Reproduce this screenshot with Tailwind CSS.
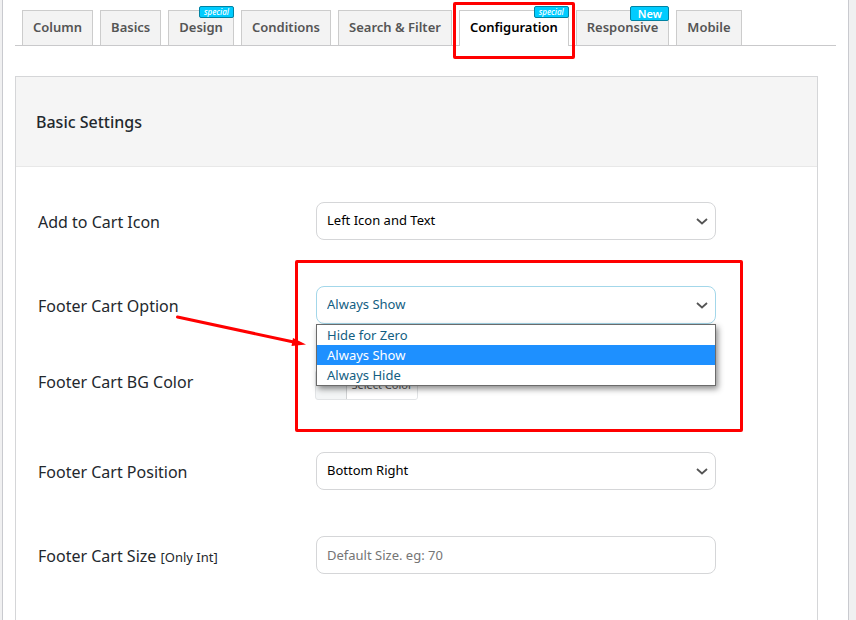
<!DOCTYPE html>
<html lang="en">
<head>
<meta charset="utf-8">
<meta name="viewport" content="width=device-width, initial-scale=1">
<title>Configuration</title>
<script src="https://cdn.jsdelivr.net/npm/@tailwindcss/browser@4"></script>
</head>
<body class="bg-[#f0f0f1] font-['Noto_Sans','Open_Sans',sans-serif] text-[#23282d]">
<main class="ml-[2px] mr-[7px] flex min-h-screen flex-col border-x border-[#c9cacf] bg-white pl-3 pr-3">

  <nav aria-label="Settings tabs" class="flex items-end gap-[7px] border-b border-[#c9c9cb] pl-[7px] pt-[10px] text-[13px] font-semibold text-[#555]">
    <a href="#column" class="flex h-[35px] items-center border border-b-0 border-[#ccc] bg-[#f3f3f3] px-[10px]">Column</a>
    <a href="#basics" class="flex h-[35px] items-center border border-b-0 border-[#ccc] bg-[#f3f3f3] px-[10px]">Basics</a>
    <a href="#design" class="relative flex h-[35px] items-center border border-b-0 border-[#ccc] bg-[#f3f3f3] px-[10px]">Design
      <span class="absolute -right-px -top-[5px] flex h-3 w-[35px] items-center justify-center rounded-xs border border-[#0083a3] bg-[#0cf] text-[8px] font-medium italic text-white">special</span>
    </a>
    <a href="#conditions" class="flex h-[35px] items-center border border-b-0 border-[#ccc] bg-[#f3f3f3] px-[10px]">Conditions</a>
    <a href="#search" class="flex h-[35px] items-center whitespace-nowrap border border-b-0 border-[#ccc] bg-[#f3f3f3] px-[10px]">Search &amp; Filter</a>
    <a href="#configuration" aria-current="page" class="relative -mb-px flex h-9 items-center border border-b-0 border-[#ccc] bg-white px-[10px] pb-px text-black">Configuration
      <span class="absolute -right-px -top-[5px] flex h-3 w-[35px] items-center justify-center rounded-xs border border-[#0083a3] bg-[#0cf] text-[8px] font-medium italic text-white">special</span>
      <span class="pointer-events-none absolute -bottom-[13px] -left-[7px] -right-[7px] -top-[9px] z-10 rounded-[2px] border-3 border-[#f00]"></span>
    </a>
    <a href="#responsive" class="relative flex h-[35px] items-center border border-b-0 border-[#ccc] bg-[#f3f3f3] px-[10px]">Responsive
      <span class="absolute -right-px -top-[5px] flex h-[15px] w-[39px] items-center justify-center rounded-xs border border-[#0083a3] bg-[#0cf] text-[11px] font-semibold leading-3 text-white">New</span>
    </a>
    <a href="#mobile" class="flex h-[35px] items-center border border-b-0 border-[#ccc] bg-[#f3f3f3] px-[10px]">Mobile</a>
  </nav>

  <section class="mr-[18px] mt-[30px] flex-1 border border-b-0 border-[#d5d6d8]">
    <h2 class="flex h-[90px] items-center border-b border-[#e8e8e8] bg-[#f5f5f5] px-5 text-base font-medium">Basic Settings</h2>
    <form class="px-[22px] pt-3">

      <div class="grid grid-cols-[278px_1fr] items-center py-[23px]">
        <label for="icon" class="pt-[2px] text-base">Add to Cart Icon</label>
        <div class="relative max-w-[400px]">
          <select id="icon" class="h-[38px] w-full appearance-none rounded-lg border border-[#d5d6d8] bg-white px-[10px] text-[13px] text-black">
            <option>Left Icon and Text</option>
          </select>
          <svg class="pointer-events-none absolute right-2 top-[14px]" width="12" height="10" viewBox="0 0 12 10" fill="none" stroke="#555" stroke-width="1.800"><path d="M1 3 L6 7.500 L11 3"/></svg>
        </div>
      </div>

      <div class="relative grid grid-cols-[278px_1fr] items-center py-[23px]">
        <label for="option" class="pt-[2px] text-base">Footer Cart Option</label>
        <div class="relative max-w-[400px]">
          <select id="option" class="h-[38px] w-full appearance-none rounded-lg border border-[#a3d7ea] bg-white px-[10px] text-[13px] text-[#135e82]">
            <option>Always Show</option>
          </select>
          <svg class="pointer-events-none absolute right-2 top-[14px]" width="12" height="10" viewBox="0 0 12 10" fill="none" stroke="#555" stroke-width="1.800"><path d="M1 3 L6 7.500 L11 3"/></svg>
          <ul role="listbox" aria-label="Footer Cart Option" class="absolute inset-x-0 top-full z-10 border border-[#6b6b6b] bg-white text-[13px] leading-5 text-[#135e82] shadow-[2px_3px_6px_rgba(0,0,0,0.45)]">
            <li role="option" class="px-[10px]">Hide for Zero</li>
            <li role="option" aria-selected="true" class="bg-[#1e90ff] px-[10px] text-white">Always Show</li>
            <li role="option" class="px-[10px]">Always Hide</li>
          </ul>
          <div class="pointer-events-none absolute -left-[21px] -right-[27px] -top-[26px] z-20 h-[172px] rounded-[2px] border-3 border-[#f00]"></div>
        </div>
        <svg class="pointer-events-none absolute left-[136px] top-[48px] z-20" width="134" height="40" viewBox="0 0 134 40"><path d="M3.500 6 L122 31.500" stroke="#f00" stroke-width="3" stroke-linecap="round"/><path d="M119 27 L132 33.500 L117.500 35 Z" fill="#f00"/></svg>
      </div>

      <div class="grid grid-cols-[278px_1fr] items-start pb-[29px] pt-[23px]">
        <label for="color" class="text-base">Footer Cart BG Color</label>
        <button id="color" type="button" class="-ml-px flex h-[30px] w-[103px] items-stretch overflow-hidden rounded-[3px] border border-[#e2e4e6] bg-[#f3f5f6] text-[11px] text-[#555]">
          <span class="w-[30px]"></span>
          <span class="flex flex-1 items-center justify-center whitespace-nowrap border-l border-[#d0d2d4] bg-white">Select Color</span>
        </button>
      </div>

      <div class="grid grid-cols-[278px_1fr] items-center py-[23px]">
        <label for="position" class="pt-[2px] text-base">Footer Cart Position</label>
        <div class="relative max-w-[400px]">
          <select id="position" class="h-[38px] w-full appearance-none rounded-lg border border-[#d5d6d8] bg-white px-[10px] text-[13px] text-black">
            <option>Bottom Right</option>
          </select>
          <svg class="pointer-events-none absolute right-2 top-[14px]" width="12" height="10" viewBox="0 0 12 10" fill="none" stroke="#555" stroke-width="1.800"><path d="M1 3 L6 7.500 L11 3"/></svg>
        </div>
      </div>

      <div class="grid grid-cols-[278px_1fr] items-center py-[23px]">
        <label for="size" class="pt-[2px] text-base">Footer Cart Size <small class="text-[13px]">[Only Int]</small></label>
        <input id="size" type="text" placeholder="Default Size. eg: 70" class="h-[38px] w-full max-w-[400px] rounded-lg border border-[#d5d6d8] bg-white px-[10px] text-[13px] text-black placeholder:text-[#757575]">
      </div>

    </form>
  </section>
</main>
</body>
</html>
